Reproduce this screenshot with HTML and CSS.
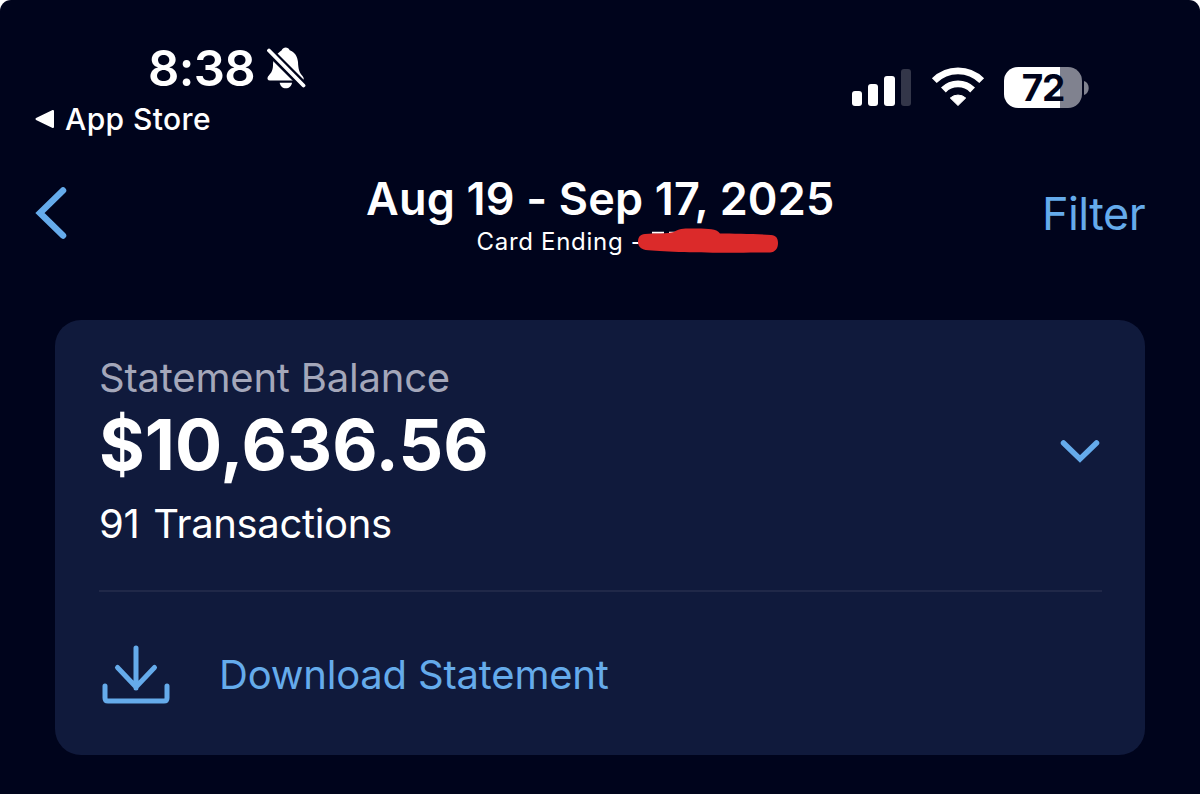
FILE: index.html
```
<!DOCTYPE html>
<html lang="en">
<head>
    <meta charset="UTF-8">
    <meta name="viewport" content="width=device-width, initial-scale=1.0">
    <title>Statement</title>
    <link rel="stylesheet" href="styles.css">
</head>
<body>
    <div class="screen">
        <div class="status-bar">
            <div class="status-left">
                <div class="clock">
                    <span class="time">8:38</span>
                    <svg class="bell" width="40" height="44" viewBox="0 0 40 44">
                        <path fill="#fff" d="M13 6.5C14.5 5 15.5 4.500 15.700 4.200C16.500 2.300 18 1.500 19.700 1.500S23 2.300 23.700 4.200C28.500 6 31.500 10 32 16C32.300 24 33.500 26.500 36.500 30C38.500 32.500 38 34.500 35.500 34.500H4C1.500 34.500 .8 32.500 2 30.500C4.500 27.500 6.800 25.500 7 19.500C7.200 12.500 8.500 9.500 13 6.500Z"/>
                        <path fill="#fff" d="M13.700 36.700H26C25.500 40 23 42.300 19.800 42.300S14.200 40 13.700 36.700Z"/>
                        <path stroke="#00041c" stroke-width="8.500" d="M1 3L40 42"/>
                        <path stroke="#fff" stroke-width="3.800" stroke-linecap="round" d="M3 4.500L37.500 39.500"/>
                    </svg>
                </div>
                <div class="back-to-app">
                    <svg width="20" height="20" viewBox="0 0 20 20"><path fill="#fff" stroke="#fff" stroke-width="2" stroke-linejoin="round" d="M1.500 10L18 2V18Z"/></svg>
                    <span>App Store</span>
                </div>
            </div>
            <div class="status-right">
                <div class="signal"><i></i><i></i><i></i><i></i></div>
                <svg class="wifi" width="54" height="40" viewBox="0 0 54 40">
                    <g fill="none" stroke="#fff" stroke-width="6.800">
                        <path d="M3.300 13.700A33.500 33.500 0 0 1 50.700 13.700"/>
                        <path d="M12.400 23A20.700 20.700 0 0 1 41.600 23"/>
                    </g>
                    <path fill="#fff" stroke="#fff" stroke-linejoin="round" d="M27 38.500L19.300 31A11.600 11.600 0 0 1 34.700 31Z"/>
                </svg>
                <div class="battery">
                    <div class="battery-body">72</div>
                    <svg width="5" height="14" viewBox="0 0 5 14"><path fill="#80828f" d="M0 0C6.300 1.800 6.300 12.200 0 14Z"/></svg>
                </div>
            </div>
        </div>

        <div class="nav">
            <svg class="back" width="36" height="56" viewBox="0 0 36 56"><path d="M30 5.500L7 28L30 50.500"/></svg>
            <div class="heading">
                <h1>Aug 19 - Sep 17, 2025</h1>
                <div class="card-ending">
                    <span>Card Ending -</span>
                    <svg class="scribble" width="142" height="28" viewBox="0 0 142 28">
                        <path stroke="#fff" stroke-width="2" d="M15 4.700H27M32 4.700H40"/>
                        <path fill="#db2a2a" d="M8 6C18 5 31 6 37 4C42 0 51 .5 60 .6C72 1 79 .5 83 5.500C96 5.500 120 6 134 7C139 7.500 141 10 141 15C141 21 138 24 133 24.500C104 25 42 25 15 22.500C5 22.500 1 19 1 14C1 9 3 6.500 8 6Z"/>
                    </svg>
                </div>
            </div>
            <a class="filter">Filter</a>
        </div>

        <div class="card">
            <div class="summary">
                <div>
                    <div class="label">Statement Balance</div>
                    <div class="amount">$10,636.56</div>
                    <div class="count">91 Transactions</div>
                </div>
                <svg class="chevron" width="40" height="26" viewBox="0 0 40 26"><path d="M3.500 4L20 20L36.500 4"/></svg>
            </div>
            <div class="download">
                <svg width="70" height="60" viewBox="0 0 70 60">
                    <path d="M35 3V43M16.500 22.500L35 42L53.500 22.500M4 41V53Q4 56 7 56H63Q66 56 66 53V41"/>
                </svg>
                <span>Download Statement</span>
            </div>
        </div>
    </div>
</body>
</html>
```
FILE: styles.css
```
* {
    box-sizing: border-box;
}
body {
    margin: 0;
    background: #fff;
    color: #fff;
    font-family: Inter, "Liberation Sans", sans-serif;
}
.screen {
    height: 794px;
    padding: 44px 55px 0;
    background: #00041c;
    border-radius: 11px 11px 0 0;
    overflow: hidden;
}
.status-bar {
    display: flex;
    justify-content: space-between;
    height: 126px;
}
.clock {
    display: flex;
    align-items: center;
    gap: 11px;
    height: 48px;
    margin-left: 93px;
}
.time {
    font-size: 49px;
    font-weight: 600;
    line-height: 49px;
    letter-spacing: -0.6px;
}
.back-to-app {
    display: flex;
    align-items: center;
    gap: 10px;
    height: 40px;
    margin: 7px 0 0 -20px;
    font-size: 30px;
    font-weight: 500;
    line-height: 40px;
    letter-spacing: 0.4px;
}
.status-right {
    display: flex;
    align-items: flex-start;
    padding-top: 23px;
    margin-right: 56px;
}
.signal {
    display: flex;
    align-items: flex-end;
    gap: 6px;
    height: 39px;
    margin-right: 20px;
}
.signal i {
    width: 10.300px;
    height: 15px;
    border-radius: 3px;
    background: #fff;
}
.signal i:nth-child(2) {
    height: 22px;
}
.signal i:nth-child(3) {
    height: 30px;
}
.signal i:nth-child(4) {
    height: 37px;
    background: #333649;
}
.wifi {
    margin-right: 19px;
}
.battery {
    display: flex;
    align-items: center;
    gap: 2px;
}
.battery-body {
    width: 78px;
    height: 41px;
    border-radius: 14px;
    background: linear-gradient(to right, #fff 56px, #80828f 56px);
    color: #00041c;
    font-size: 37px;
    font-weight: 700;
    line-height: 42px;
    letter-spacing: -1.200px;
    text-align: center;
}
.nav {
    display: flex;
    height: 150.400px;
}
.back {
    margin: 15px 0 0 -22px;
}
.back path,
.chevron path,
.download path {
    fill: none;
    stroke: #65abeb;
    stroke-width: 6.500;
    stroke-linecap: round;
}
.heading {
    margin-left: 297px;
}
h1 {
    margin: 0;
    font-size: 45px;
    font-weight: 600;
    line-height: 57px;
    letter-spacing: 0.180px;
    white-space: nowrap;
}
.card-ending {
    display: flex;
    height: 28px;
    margin: 1px 0 0 110.500px;
    font-size: 24px;
    line-height: 28px;
    letter-spacing: 0.700px;
    white-space: nowrap;
}
.scribble {
    margin-left: -6px;
}
.filter {
    margin-left: auto;
    color: #65abeb;
    font-size: 45px;
    line-height: 87px;
    letter-spacing: -0.600px;
}
.card {
    height: 435px;
    padding: 29.600px 43px 0 44px;
    border-radius: 26px;
    background: #101a3c;
}
.summary {
    display: flex;
    justify-content: space-between;
    align-items: flex-start;
    height: 242px;
    border-bottom: 2px solid #202848;
}
.label,
.count,
.download {
    font-size: 40px;
    line-height: 56px;
    letter-spacing: -0.200px;
}
.label {
    color: #a4a7ba;
}
.amount {
    font-size: 70px;
    font-weight: 700;
    line-height: 78px;
}
.count {
    margin-top: 12px;
    letter-spacing: -0.350px;
    word-spacing: 3px;
}
.chevron {
    margin: 89px 2px 0 0;
}
.chevron path {
    stroke-width: 5.500;
}
.download {
    display: flex;
    align-items: center;
    gap: 48px;
    height: 166px;
    padding-left: 2px;
    color: #65abeb;
}
.download path {
    stroke-width: 5;
    stroke-linejoin: round;
}
```
